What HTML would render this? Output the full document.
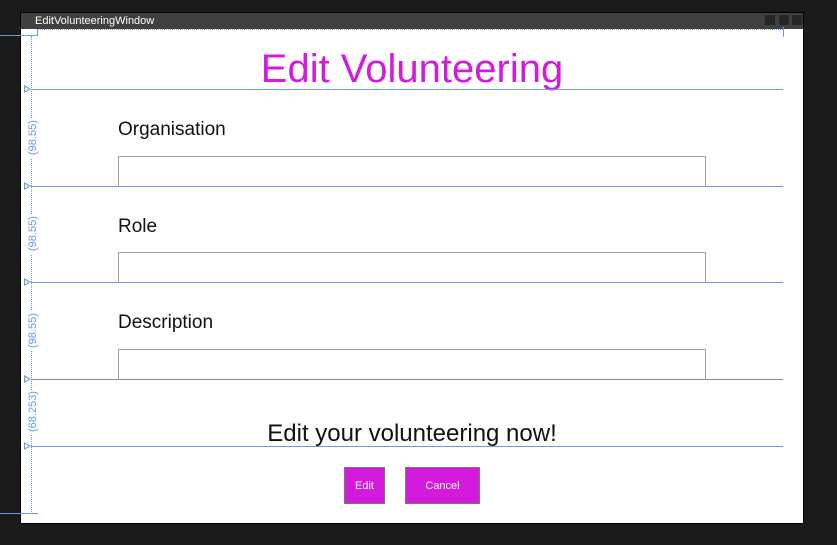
<!DOCTYPE html>
<html><head><meta charset="utf-8"><style>
*{margin:0;padding:0;box-sizing:border-box}
body{width:837px;height:545px;background:#1b1b1b;position:relative;overflow:hidden;font-family:"Liberation Sans",sans-serif}
.a{position:absolute}
.hl{position:absolute;left:31px;width:752px;height:1px;background:#6a9be0}
.tri{position:absolute;left:24px;width:0;height:0;border-top:4px solid transparent;border-bottom:4px solid transparent;border-left:7px solid #6a9be0}
.tri:after{content:"";position:absolute;left:-6px;top:-2px;border-top:2px solid transparent;border-bottom:2px solid transparent;border-left:4px solid #fff}
.lab{position:absolute;left:26px;width:14px;color:#6a9be0;font-size:11px;writing-mode:vertical-rl;transform:rotate(180deg);background:#fff;text-align:center;line-height:14px}
.inp{position:absolute;left:118px;width:588px;height:31px;border:1px solid #a0a0a0;border-bottom:none;background:transparent}
.fl{position:absolute;left:118px;font-size:19px;color:#111}
.btn{position:absolute;top:467px;height:37px;background:#d41adc;border:1px solid #777;color:#fff;font-size:11px;text-align:center;line-height:37px}
</style></head><body>
<div class="a" style="left:20px;top:12px;width:784px;height:512px;background:#fff;border:1px solid #000"></div>
<div class="a" style="left:21px;top:13px;width:782px;height:16px;background:#404040"></div>
<div class="a" style="left:35px;top:14px;color:#fff;font-size:11px;line-height:15px">EditVolunteeringWindow</div>
<div class="a" style="left:765px;top:15px;width:10px;height:10px;background:#262626"></div>
<div class="a" style="left:779px;top:15px;width:10px;height:10px;background:#262626"></div>
<div class="a" style="left:792px;top:15px;width:10px;height:10px;background:#262626"></div>
<div class="a" style="left:37px;top:29px;width:746px;height:0;border-top:1px dotted #8aa0c8"></div>
<div class="a" style="left:783px;top:27px;width:1px;height:10px;background:#6a9be0"></div>
<div class="a" style="left:0;top:35px;width:38px;height:1px;background:#6a9be0"></div>
<div class="a" style="left:37px;top:29px;width:1px;height:7px;background:#6a9be0"></div>
<div class="a" style="left:0;top:513px;width:38px;height:1px;background:#6a9be0"></div>
<div class="a" style="left:31px;top:36px;width:0;height:478px;border-left:1px dotted #6a9be0"></div>
<div class="a" style="left:0;width:824px;text-align:center;color:#d41adc;font-size:40px;line-height:1;top:49px">Edit Volunteering</div>
<div class="hl" style="top:89px"></div><div class="hl" style="top:186px"></div><div class="hl" style="top:282px"></div><div class="hl" style="top:379px;background:#8a8a9a"></div><div class="hl" style="top:446px"></div>
<div class="tri" style="top:85px"></div><div class="tri" style="top:182px"></div><div class="tri" style="top:278px"></div><div class="tri" style="top:375px"></div><div class="tri" style="top:442px"></div>
<div class="lab" style="top:118px;height:40px">(98.55)</div>
<div class="lab" style="top:214px;height:40px">(98.55)</div>
<div class="lab" style="top:311px;height:40px">(98.55)</div>
<div class="lab" style="top:390px;height:44px">(68.253)</div>
<div class="fl" style="top:119px">Organisation</div>
<div class="inp" style="top:156px"></div>
<div class="fl" style="top:216px">Role</div>
<div class="inp" style="top:252px"></div>
<div class="fl" style="top:312px">Description</div>
<div class="inp" style="top:349px"></div>
<div class="a" style="left:0;top:420px;width:824px;text-align:center;font-size:24px;color:#111">Edit your volunteering now!</div>
<div class="btn" style="left:344px;width:41px">Edit</div>
<div class="btn" style="left:405px;width:75px">Cancel</div>
</body></html>
